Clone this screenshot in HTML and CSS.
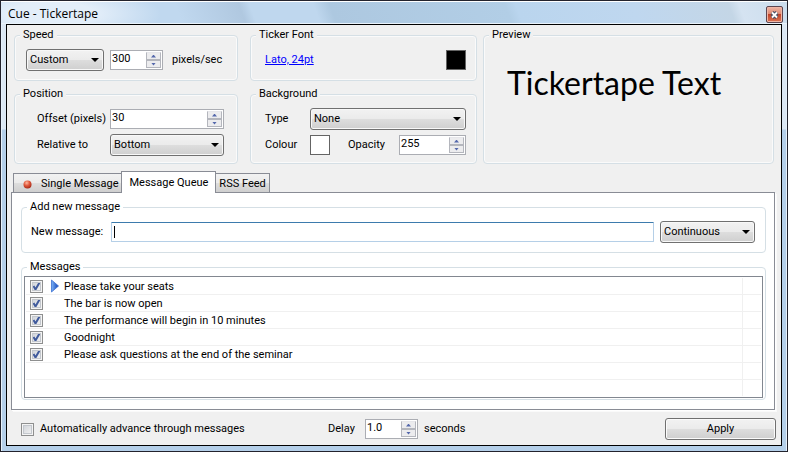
FILE: index.html
```html
<!DOCTYPE html>
<html lang="en">
<head>
<meta charset="utf-8">
<title>Cue - Tickertape</title>
<link rel="stylesheet" href="styles.css">
</head>
<body>
<div class="window">
  <header class="titlebar">
    <h1 class="title">Cue - Tickertape</h1>
    <button class="close" type="button" aria-label="Close">
      <svg width="9" height="8" viewBox="0 0 9 8"><path d="M2 1.500L7 6.500M7 1.500L2 6.500" stroke="#4a4f63" stroke-width="4"/><path d="M2 1.500L7 6.500M7 1.500L2 6.500" stroke="#fff" stroke-width="1.800"/></svg>
    </button>
  </header>
  <form class="client">
    <div class="settings">
      <div class="column column-speed">
        <fieldset class="group">
          <legend>Speed</legend>
          <div class="row">
            <select class="combo combo-speed" aria-label="Speed preset"><option>Custom</option></select>
            <span class="spin spin-speed"><input id="speed" type="text" value="300"><span class="arrows"><button type="button" class="up" aria-label="Increase"></button><button type="button" class="down" aria-label="Decrease"></button></span></span>
            <label class="unit" for="speed">pixels/sec</label>
          </div>
        </fieldset>
        <fieldset class="group position">
          <legend>Position</legend>
          <label for="offset">Offset (pixels)</label>
          <span class="spin"><input id="offset" type="text" value="30"><span class="arrows"><button type="button" class="up" aria-label="Increase"></button><button type="button" class="down" aria-label="Decrease"></button></span></span>
          <label for="relative">Relative to</label>
          <select class="combo" id="relative"><option>Bottom</option></select>
        </fieldset>
      </div>
      <div class="column column-font">
        <fieldset class="group">
          <legend>Ticker Font</legend>
          <div class="row row-font">
            <a href="#">Lato, 24pt</a>
            <button type="button" class="swatch swatch-black" aria-label="Font colour"></button>
          </div>
        </fieldset>
        <fieldset class="group background">
          <legend>Background</legend>
          <label for="type">Type</label>
          <select class="combo" id="type"><option>None</option></select>
          <label for="colour">Colour</label>
          <div class="row row-colour">
            <button type="button" class="swatch" id="colour"></button>
            <label for="opacity">Opacity</label>
            <span class="spin spin-opacity"><input id="opacity" type="text" value="255"><span class="arrows"><button type="button" class="up" aria-label="Increase"></button><button type="button" class="down" aria-label="Decrease"></button></span></span>
          </div>
        </fieldset>
      </div>
      <fieldset class="group preview">
        <legend>Preview</legend>
        <p class="preview-text">Tickertape Text</p>
      </fieldset>
    </div>

    <div class="tabs" role="tablist">
      <button type="button" class="tab" role="tab"><svg width="9" height="9" viewBox="0 0 9 9"><defs><radialGradient id="dot" cx=".4" cy=".3" r=".7"><stop offset="0" stop-color="#ffb9a0"/><stop offset=".5" stop-color="#e0593c"/><stop offset="1" stop-color="#a82a18"/></radialGradient></defs><circle cx="4.500" cy="4.500" r="4" fill="url(#dot)"/></svg>Single Message</button>
      <button type="button" class="tab tab-active" role="tab" aria-selected="true">Message Queue</button>
      <button type="button" class="tab" role="tab">RSS Feed</button>
    </div>
    <section class="panel" role="tabpanel">
      <fieldset class="group add">
        <legend>Add new message</legend>
        <div class="row row-add">
          <label for="message">New message:</label>
          <input class="message" id="message" type="text">
          <select class="combo combo-mode" aria-label="Mode"><option>Continuous</option></select>
        </div>
      </fieldset>
      <fieldset class="group messages">
        <legend>Messages</legend>
        <div class="list">
          <table>
            <tr><td class="check"><input type="checkbox" id="m1" checked></td><td class="mark"><svg width="8" height="14" viewBox="0 0 8 14"><defs><linearGradient id="play" x2="1" y2="0"><stop offset="0" stop-color="#7db4f8"/><stop offset="1" stop-color="#0d3fb4"/></linearGradient></defs><path d="M.5 1L7.500 7L.5 13Z" fill="url(#play)" stroke="#3a6fd0" stroke-width=".8"/></svg></td><td><label for="m1">Please take your seats</label></td><td class="end"></td></tr>
            <tr><td class="check"><input type="checkbox" id="m2" checked></td><td class="mark"></td><td><label for="m2">The bar is now open</label></td><td class="end"></td></tr>
            <tr><td class="check"><input type="checkbox" id="m3" checked></td><td class="mark"></td><td><label for="m3">The performance will begin in 10 minutes</label></td><td class="end"></td></tr>
            <tr><td class="check"><input type="checkbox" id="m4" checked></td><td class="mark"></td><td><label for="m4">Goodnight</label></td><td class="end"></td></tr>
            <tr><td class="check"><input type="checkbox" id="m5" checked></td><td class="mark"></td><td><label for="m5">Please ask questions at the end of the seminar</label></td><td class="end"></td></tr>
            <tr><td class="check"></td><td class="mark"></td><td></td><td class="end"></td></tr>
            <tr><td class="check"></td><td class="mark"></td><td></td><td class="end"></td></tr>
          </table>
        </div>
      </fieldset>
    </section>

    <footer class="footer">
      <input type="checkbox" id="auto">
      <label class="auto-label" for="auto">Automatically advance through messages</label>
      <label class="delay-label" for="delay">Delay</label>
      <span class="spin spin-delay"><input id="delay" type="text" value="1.0"><span class="arrows"><button type="button" class="up" aria-label="Increase"></button><button type="button" class="down" aria-label="Decrease"></button></span></span>
      <span class="seconds">seconds</span>
      <button type="submit" class="apply">Apply</button>
    </footer>
  </form>
</div>
</body>
</html>
```
FILE: styles.css
```css
* { box-sizing: border-box; }

body {
  margin: 0;
  font: 11px/12px Roboto, "Liberation Sans", sans-serif;
  color: #000;
}

button, input, select { font: inherit; color: inherit; margin: 0; }

.window {
  display: flex;
  flex-direction: column;
  min-height: 100vh;
  padding: 0 5px 5px;
  border: 1px solid #23232d;
  background: linear-gradient(#dce8f4 0 128px, #b4cfe9 129px);
  box-shadow: inset 0 1px #fff, inset 1px 0 #e6f1fb, inset -1px 0 #e6f1fb;
}

/* Title bar */
.titlebar {
  display: flex;
  justify-content: space-between;
  height: 23px;
  margin: 0 -5px;
  padding: 4px 4px 0 7px;
  border-top: 1px solid #fff;
  border-bottom: 1px solid #eaf3fb;
  background:
    radial-gradient(ellipse 110px 30px at 50px 12px, #e3eef9 40%, transparent),
    linear-gradient(70deg, #c0d8ef 0 170px, #b0c8e0 230px, #bfd7ee 240px 300px, #adc8e0 315px, #b2cee6 480px, #bad5ee 490px, #bfd7ef 600px, #c4d6e6 690px, #d5e3f1 700px, #cbdded);
}

.title {
  margin: 0;
  font: 12px/16px "Open Sans", sans-serif;
}

.close {
  display: flex;
  align-items: center;
  justify-content: center;
  width: 17px;
  height: 17px;
  padding: 0;
  border: 1px solid #5c4550;
  border-radius: 2px;
  background: linear-gradient(#eeb5a6, #df8b74 45%, #c0432a 50%, #db7453);
  box-shadow: inset 0 0 0 1px #f0b6a5;
}
.close svg { flex: none; }

/* Client area */
.client {
  flex: 1;
  padding: 4px 0 5px;
  border: 1px solid #000;
  background: #f0f0f0;
}

.settings { display: flex; padding: 0 7px; }
.column { display: flex; flex-direction: column; gap: 7px; }
.column > :first-child { flex: 1; }
.column-speed { width: 224px; margin-right: 12px; }
.column-font { width: 227px; margin-right: 6px; }

.group {
  min-width: 0;
  margin: 0;
  padding: 8px 13px 7px 11px;
  border: 1px solid #d5dfe5;
  border-radius: 4px;
  box-shadow: inset 0 0 0 1px #fafafa;
}

legend {
  margin-left: -6px;
  padding: 0 3px;
  background: #f0f0f0;
}

.row { display: flex; align-items: center; height: 22px; }

.position, .background {
  display: grid;
  grid-auto-rows: 22px;
  row-gap: 4px;
  align-items: center;
}
.position { grid-template-columns: 84px 1fr; }
.position label { padding-left: 11px; white-space: nowrap; }
.background { grid-template-columns: 48px 1fr; }
.background > label { padding-left: 3px; }
.column-font .group { padding-right: 10px; }
.row-font { justify-content: space-between; padding-left: 3px; }
.row-font a { color: #00f; }
.row-colour label { margin-left: 18px; }
.row-colour .spin { margin-left: auto; }

.preview { flex: 1; min-height: 135px; }
.preview-text {
  margin: 14px 12px;
  font: 32px/40px Lato, sans-serif;
  white-space: nowrap;
}

/* Controls */
.combo {
  width: 100%;
  height: 22px;
  padding: 0 20px 0 3px;
  border: 1px solid #707070;
  border-radius: 3px;
  appearance: none;
  background:
    url("data:image/svg+xml,%3Csvg xmlns='http://www.w3.org/2000/svg' width='8' height='4'%3E%3Cpath d='M0 0h8L4 4z'/%3E%3C/svg%3E") no-repeat right 4px center,
    linear-gradient(#f2f2f2, #ebebeb 48%, #dddddd 52%, #cfcfcf);
  box-shadow: inset 0 0 0 1px #f8f8f8;
}
.combo-speed { width: 78px; }
.combo-mode { width: 95px; }

.spin {
  display: flex;
  height: 20px;
  border: 1px solid #abadb3;
  background: #fff;
}
.spin input {
  flex: 1;
  width: 0;
  padding: 0 1px 2px;
  border: 0;
  background: none;
  outline: 0;
}
.spin-speed { width: 53px; margin-left: 6px; }
.spin-opacity { width: 67px; }
.spin-delay { width: 53px; }
.unit { margin-left: 9px; }

.arrows {
  display: flex;
  flex-direction: column;
  width: 16px;
  padding: 1px 1px 1px 0;
}
.arrows button {
  display: flex;
  flex: 1;
  align-items: center;
  justify-content: center;
  min-height: 0;
  padding: 0;
  border: 1px solid #b4b6bd;
  background: #ececee;
}
.arrows .up { border-top-color: #e6e6ea; }
.arrows button::after {
  content: "";
  width: 5px;
  height: 3px;
  background: #5468ac;
  clip-path: polygon(50% 0, 100% 100%, 0 100%);
}
.arrows .down::after { clip-path: polygon(0 0, 100% 0, 50% 100%); }

.swatch {
  width: 20px;
  height: 20px;
  padding: 0;
  border: 1px solid #646464;
  background: #fff;
}
.swatch-black { background: #000; }

input[type="checkbox"] {
  display: block;
  width: 13px;
  height: 13px;
  border: 1px solid #8e8f8f;
  appearance: none;
  background: linear-gradient(135deg, #cbcfd5, #f6f6f6);
  box-shadow: inset 0 0 0 1px #f4f4f4, inset 0 0 0 2px #c3c7cd;
}
input[type="checkbox"]:checked {
  background:
    url("data:image/svg+xml,%3Csvg xmlns='http://www.w3.org/2000/svg' width='11' height='11'%3E%3Cpath d='M2.500 5L4.500 8.500L8.500 1.500' fill='none' stroke='%23405a9c' stroke-width='2'/%3E%3C/svg%3E") no-repeat,
    linear-gradient(135deg, #cbcfd5, #f6f6f6);
}

/* Tabs */
.tabs {
  display: flex;
  align-items: flex-end;
  height: 21px;
  margin: 7px 6px 0;
}
.tab {
  display: flex;
  align-items: center;
  height: 19px;
  padding: 2px 3px 0;
  border: 1px solid #898c95;
  border-bottom: 0;
  background: linear-gradient(#f2f2f2, #ebebeb 48%, #dddddd 52%, #cfcfcf);
  white-space: nowrap;
}
.tab svg { margin: 0 9px 0 6px; }
.tab-active {
  z-index: 1;
  height: 22px;
  margin: 0 -1px;
  padding: 0 7px;
  margin-bottom: -1px;
  background: #fff;
}

.panel {
  display: flex;
  flex-direction: column;
  gap: 8px;
  margin: 0 6px 0 4px;
  padding: 8px 8px 9px 9px;
  border: 1px solid #898c95;
  background: #fff;
  box-shadow: 1px 1px #fff, 2px 2px #fafafa;
}
.panel .group { box-shadow: none; }
.panel legend { margin-left: -4px; background: #fff; }

.add { padding: 8px 10px 9px 9px; }
.row-add label { width: 80px; white-space: nowrap; }
.message {
  flex: 1;
  min-width: 0;
  height: 20px;
  margin-right: 6px;
  padding: 0 2px;
  border: 1px solid #b5cfe7;
  border-top-color: #3d7bad;
  border-radius: 1px;
  outline: 0;
  background: linear-gradient(#000, #000) no-repeat 2px 3px / 1px 12px #fff;
}

.panel .messages { padding: 3px 2px 1px; }
.panel .messages legend { margin-left: 3px; }
.list { padding: 1px; border: 1px solid #828790; }

table { width: 100%; border-collapse: separate; border-spacing: 0; }
td { height: 17px; padding: 2px 0 0; border-bottom: 1px solid #f0f0f0; line-height: 14px; }
td label { display: block; }
tr:last-child td { height: 16px; border-bottom: 0; }
.check { width: 25px; padding: 0 0 0 4px; }
.mark { width: 13px; padding: 0; }
.mark svg { display: block; }
.end { width: 19px; border-left: 1px solid #f0f0f0; }

/* Footer */
.footer {
  display: flex;
  align-items: center;
  padding: 8px 5px 0 14px;
}
.auto-label { width: 288px; margin-left: 6px; }
.delay-label { width: 37px; }
.seconds { margin-left: 6px; }
.apply {
  width: 111px;
  height: 22px;
  margin-left: auto;
  border: 1px solid #707070;
  border-radius: 3px;
  background: linear-gradient(#f2f2f2, #ebebeb 48%, #dddddd 52%, #cfcfcf);
  box-shadow: inset 0 0 0 1px #fbfbfb;
}
```
